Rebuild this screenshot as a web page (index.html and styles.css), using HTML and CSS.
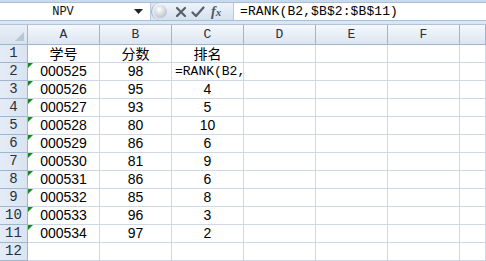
FILE: index.html
```html
<!DOCTYPE html>
<html>
<head>
<meta charset="utf-8">
<link rel="stylesheet" href="styles.css">
</head>
<body>
<div class="app">
  <div class="topband"></div>
  <div class="fbar">
    <div class="namebox">
      <span class="name">NPV</span>
      <span class="dd"><svg width="9" height="5" viewBox="0 0 9 5"><path d="M0 0h9L4.5 5z" fill="#222"/></svg></span>
    </div>
    <div class="pill">
      <span class="ball"></span>
      <svg class="ic" width="14" height="14" viewBox="0 0 14 14"><path d="M3 3L11 11M11 3L3 11" stroke="#56606c" stroke-width="2.2" stroke-linecap="round"/></svg>
      <svg class="ic" width="14" height="14" viewBox="0 0 14 14"><path d="M1.5 7.5L5 11L12.5 2.5" stroke="#56606c" stroke-width="2.2" fill="none" stroke-linecap="round" stroke-linejoin="round"/></svg>
      <span class="fx">f<i>x</i></span>
    </div>
    <div class="finput">=RANK(B2,$B$2:$B$11)</div>
  </div>
  <div class="band"></div>
  <div class="sheet">
    <div class="corner"><span class="tri"></span></div>
    <div class="ch">A</div><div class="ch">B</div><div class="ch">C</div><div class="ch">D</div><div class="ch">E</div><div class="ch">F</div><div class="ch last"></div>

    <div class="rh">1</div><div class="c cjk">学号</div><div class="c cjk">分数</div><div class="c cjk">排名</div><div class="c"></div><div class="c"></div><div class="c"></div><div class="c"></div>
    <div class="rh">2</div><div class="c t">000525</div><div class="c">98</div><div class="c edit">=RANK(B2,</div><div class="c"></div><div class="c"></div><div class="c"></div><div class="c"></div>
    <div class="rh">3</div><div class="c t">000526</div><div class="c">95</div><div class="c">4</div><div class="c"></div><div class="c"></div><div class="c"></div><div class="c"></div>
    <div class="rh">4</div><div class="c t">000527</div><div class="c">93</div><div class="c">5</div><div class="c"></div><div class="c"></div><div class="c"></div><div class="c"></div>
    <div class="rh">5</div><div class="c t">000528</div><div class="c">80</div><div class="c">10</div><div class="c"></div><div class="c"></div><div class="c"></div><div class="c"></div>
    <div class="rh">6</div><div class="c t">000529</div><div class="c">86</div><div class="c">6</div><div class="c"></div><div class="c"></div><div class="c"></div><div class="c"></div>
    <div class="rh">7</div><div class="c t">000530</div><div class="c">81</div><div class="c">9</div><div class="c"></div><div class="c"></div><div class="c"></div><div class="c"></div>
    <div class="rh">8</div><div class="c t">000531</div><div class="c">86</div><div class="c">6</div><div class="c"></div><div class="c"></div><div class="c"></div><div class="c"></div>
    <div class="rh">9</div><div class="c t">000532</div><div class="c">85</div><div class="c">8</div><div class="c"></div><div class="c"></div><div class="c"></div><div class="c"></div>
    <div class="rh">10</div><div class="c t">000533</div><div class="c">96</div><div class="c">3</div><div class="c"></div><div class="c"></div><div class="c"></div><div class="c"></div>
    <div class="rh">11</div><div class="c t">000534</div><div class="c">97</div><div class="c">2</div><div class="c"></div><div class="c"></div><div class="c"></div><div class="c"></div>
    <div class="rh">12</div><div class="c"></div><div class="c"></div><div class="c"></div><div class="c"></div><div class="c"></div><div class="c"></div><div class="c"></div>
    <div class="rh tail"></div><div class="c tail"></div><div class="c tail"></div><div class="c tail"></div><div class="c tail"></div><div class="c tail"></div><div class="c tail"></div><div class="c tail"></div>
  </div>
</div>
</body>
</html>
```
FILE: styles.css
```css
html, body { margin: 0; padding: 0; background: #fff; }
body { width: 486px; height: 261px; overflow: hidden; font-family: "Liberation Sans", Arial, sans-serif; }
.app { width: 486px; }
.topband { height: 2px; background: #c9d9ee; }
.fbar { display: flex; background: #dfe9f5; border-top: 1px solid #a9bfd6; border-bottom: 1px solid #a9bfd6; box-sizing: border-box; height: 19px; }
.namebox { width: 151px; display: flex; align-items: center; background: #fff; border-right: 1px solid #b9c9dc; box-sizing: border-box; }
.name { width: 126px; text-align: center; font-family: "Liberation Mono", monospace; font-size: 12px; color: #111; }
.dd { width: 24px; display: flex; justify-content: center; align-items: center; }
.pill { width: 82px; display: flex; align-items: center; gap: 3px; padding-left: 2px; box-sizing: border-box; background: linear-gradient(#eef3fa, #d5e1ef); border-radius: 9px 0 0 9px; border-left: 1px solid #9fb3c9; }
.ball { width: 13px; height: 13px; border-radius: 50%; background: radial-gradient(circle at 40% 35%, #ffffff, #c8ced6 60%, #a9b1bb); margin-right: 4px; }
.ic { display: block; }
.fx { font-family: "Liberation Serif", serif; font-style: italic; font-size: 14px; color: #4c5866; font-weight: bold; margin-left: 3px; }
.fx i { font-size: 11px; }
.finput { flex: 1; background: #fff; border-left: 1px solid #b9c9dc; padding-left: 6px; font-family: "Liberation Mono", monospace; font-size: 13px; line-height: 17px; color: #000; letter-spacing: 0.1px; }
.band { height: 4px; background: #dbe6f3; border-bottom: 1px solid #b0c3d9; box-sizing: border-box; }
.sheet { display: grid; grid-template-columns: 28px repeat(6, 72px) 26px; grid-template-rows: 20px repeat(12, 18px) 2px; }
.sheet > div { box-sizing: border-box; border-right: 1px solid #d0d7e5; border-bottom: 1px solid #d0d7e5; overflow: hidden; white-space: nowrap; }
.sheet > .tail { border-bottom: 0; }
.corner { background: linear-gradient(#e9eff7, #d8e2ef); position: relative; border-right: 1px solid #9eb6ce !important; border-bottom: 1px solid #9eb6ce !important; }
.tri { position: absolute; right: 3px; bottom: 3px; width: 0; height: 0; border-left: 9px solid transparent; border-bottom: 9px solid #b9c6d6; }
.ch { background: linear-gradient(#f5f8fc, #dce5f1); border-right: 1px solid #9eb6ce !important; border-bottom: 1px solid #9eb6ce !important; text-align: center; font-family: "Liberation Mono", monospace; font-size: 13px; line-height: 19px; color: #27313d; }
.rh { background: linear-gradient(90deg, #e4ecf7, #dae4f1); border-right: 1px solid #9eb6ce !important; border-bottom: 1px solid #9eb6ce !important; text-align: center; font-family: "Liberation Mono", monospace; font-size: 14px; line-height: 17px; color: #27313d; }
.c { text-align: center; font-size: 14px; line-height: 17px; color: #000; position: relative; }
.sheet > .cjk { font-family: "Noto Sans CJK SC", sans-serif; font-size: 14px; line-height: 17px; overflow: visible; }
.t::before { content: ""; position: absolute; left: 0; top: 0; border-top: 5px solid #18891e; border-right: 5px solid transparent; }
.edit { text-align: left; padding-left: 3px; font-family: "Liberation Mono", monospace; font-size: 13px; }
```
